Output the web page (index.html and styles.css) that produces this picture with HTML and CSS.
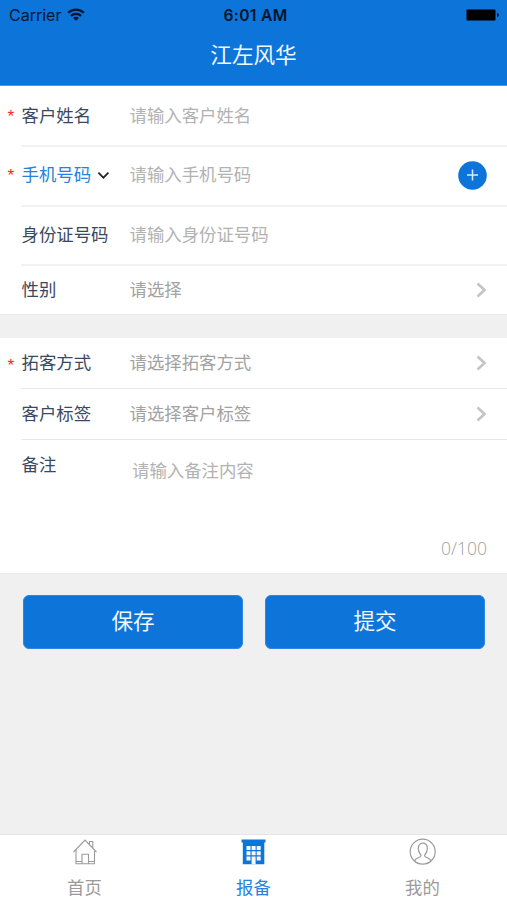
FILE: index.html
```html
<!DOCTYPE html>
<html lang="zh-CN">
<head>
<meta charset="utf-8">
<meta name="viewport" content="width=device-width, initial-scale=1">
<title>江左风华</title>
<link rel="stylesheet" href="styles.css">
</head>
<body>
<div class="app">
  <header class="header">
    <div class="status">
      <div class="carrier"><span>Carrier</span>
        <svg class="wifi" width="18" height="13" viewBox="0 0 18 13" fill="none" stroke="#03142a" stroke-width="2.300"><path d="M1.2 4.8a11 11 0 0 1 15.6 0M4 7.900a7 7 0 0 1 10 0"/><path d="M9 12.800L6.100 10a3.900 3.900 0 0 1 5.800 0z" fill="#03142a" stroke="none"/></svg>
      </div>
      <div class="time">6:01 AM</div>
      <svg class="battery" width="34" height="12" viewBox="0 0 34 12"><rect x=".5" y=".5" width="29" height="11" rx="1.5" fill="#000" stroke="#06366a"/><path d="M31 4c2.4 0 2.4 4 0 4z" fill="#000"/></svg>
    </div>
    <h1 class="title">江左风华</h1>
  </header>

  <section class="group">
    <div class="row tall">
      <span class="star">*</span><span class="label">客户姓名</span><span class="value hint">请输入客户姓名</span>
    </div>
    <div class="row tall raised">
      <span class="star">*</span>
      <span class="label active">手机号码<svg class="caret" width="13" height="9" viewBox="0 0 13 9" fill="none" stroke="#222" stroke-width="1.7"><path d="M1.4 1.7l5 5 5-5"/></svg></span>
      <span class="value hint">请输入手机号码</span>
      <svg class="add" width="29" height="29" viewBox="0 0 29 29"><circle cx="14.5" cy="14.5" r="14.3" fill="#0d75da"/><path d="M9 14h11M14.5 8.5v11" stroke="#dcebfb" stroke-width="1.5"/></svg>
    </div>
    <div class="row id-row raised">
      <span class="star"></span><span class="label">身份证号码</span><span class="value hint">请输入身份证号码</span>
    </div>
    <div class="row gender last">
      <span class="star"></span><span class="label">性别</span><span class="value">请选择</span>
      <svg class="arrow" width="11" height="16" viewBox="0 0 11 16"><path d="M1.5 1.5L8.5 8l-7 6.5"/></svg>
    </div>
  </section>

  <section class="group second">
    <div class="row short raised">
      <span class="star low">*</span><span class="label">拓客方式</span><span class="value">请选择拓客方式</span>
      <svg class="arrow" width="11" height="16" viewBox="0 0 11 16"><path d="M1.5 1.5L8.5 8l-7 6.5"/></svg>
    </div>
    <div class="row tag raised">
      <span class="star"></span><span class="label">客户标签</span><span class="value">请选择客户标签</span>
      <svg class="arrow" width="11" height="16" viewBox="0 0 11 16"><path d="M1.5 1.5L8.5 8l-7 6.5"/></svg>
    </div>
    <div class="remark">
      <span class="remark-label">备注</span>
      <span class="remark-hint">请输入备注内容</span>
      <span class="count">0/100</span>
    </div>
  </section>

  <div class="actions">
    <button class="btn" type="button">保存</button>
    <button class="btn" type="button">提交</button>
  </div>

  <nav class="tabs">
    <div class="tab">
      <svg width="28" height="28" viewBox="0 0 28 28" fill="none" stroke="#9b9b9b" stroke-width="1.1"><path d="M2.500 14L14 2l11.500 12M5 11.500v14.200h18.500V11.500M18.500 6V3.500h3.300v6M11 25.500v-9.300h6.500v9.300M5 23.500h6M17.500 23.500h6"/></svg>
      <span>首页</span>
    </div>
    <div class="tab on">
      <svg width="28" height="28" viewBox="0 0 28 28"><path d="M1.500 1.500h24v3h-1.200v21.800H2.800V4.500H1.500z" fill="#0d75da"/><path d="M6.500 8h4v4h-4zM11.600 8h4v4h-4zM16.700 8h4v4h-4zM6.500 13.200h4v4h-4zM11.600 13.200h4v4h-4zM16.700 13.200h4v4h-4zM6.500 18.400h4v4h-4zM11.600 18.400h4v7.900h-4zM16.700 18.400h4v4h-4z" fill="#f4f9ff"/></svg>
      <span>报备</span>
    </div>
    <div class="tab">
      <svg width="28" height="28" viewBox="0 0 28 28" fill="none" stroke="#9b9b9b" stroke-width="1.2"><circle cx="13.700" cy="13.700" r="12.500"/><path d="M5.500 23c.7-2.500 3.300-3 5.500-4 1.300-.7 1.100-2 .2-3-1.300-1.500-1.900-3.300-1.900-5.500 0-3.300 1.800-5.300 4.500-5.300s4.500 2 4.500 5.300c0 2.200-.6 4-1.900 5.500-.9 1-1.100 2.300.2 3 2.200 1 4.800 1.500 5.500 4"/></svg>
      <span>我的</span>
    </div>
  </nav>
</div>
</body>
</html>
```
FILE: styles.css
```css
* { box-sizing: border-box; }
body {
  margin: 0;
  background: #f0f0f0;
  font-family: "Liberation Sans", "Noto Sans CJK SC", sans-serif;
  font-size: 17.4px;
  line-height: 26px;
}
.app {
  display: flex;
  flex-direction: column;
  width: 507px;
  height: 900px;
}
svg { display: block; flex: none; }
.header {
  height: 86px;
  background: #0d75da;
  border-bottom: 1px solid #4b98e3;
}
.status {
  display: grid;
  grid-template-columns: 1fr auto 1fr;
  align-items: center;
  height: 30px;
  padding: 0 7px 0 9px;
  font-family: Inter, sans-serif;
  color: #03142a;
}
.carrier {
  display: flex;
  align-items: center;
  gap: 6px;
  font-size: 16px;
}
.wifi { margin-top: -2px; }
.time {
  padding: 1px 0 0 2px;
  font-size: 15.7px;
  font-weight: 600;
  letter-spacing: .3px;
}
.battery { justify-self: end; }
.title {
  margin: 10px 0 0;
  font-size: 21.6px;
  line-height: 32px;
  font-weight: 400;
  text-align: center;
  color: #f2f8ff;
}
.group { background: #fff; }
.second {
  margin-top: 23px;
  border-bottom: 1px solid #ebebeb;
}
.row {
  display: flex;
  align-items: center;
  position: relative;
  padding-right: 20px;
}
.row::after {
  content: "";
  position: absolute;
  left: 21px;
  right: 0;
  bottom: -1px;
  height: 2px;
  background: #f1f1f1;
}
.raised { padding-bottom: 2px; }
.tall { height: 60px; }
.id-row { height: 59px; }
.gender { height: 50px; padding-bottom: 1px; }
.short { height: 51px; }
.tag { height: 51px; }
.second .row::after { bottom: 0; height: 1px; background: #e8e8e8; }
.row.last::after { left: 0; bottom: 0; height: 1px; background: #e9e9e9; }
.star {
  width: 21.5px;
  padding-left: 7.5px;
  color: #fb2222;
  font-size: 17.4px;
}
.low { padding-top: 4px; }
.label {
  display: flex;
  align-items: center;
  width: 108px;
  color: #3a4962;
}
.active { color: #2581dc; }
.caret { margin-left: 6px; }
.value { flex: 1; color: #a2a2a2; }
.hint { color: #b2b2b2; }
.arrow {
  fill: none;
  stroke: #c5c5c7;
  stroke-width: 2.7;
}
.remark {
  display: grid;
  grid-template-columns: 110.5px 1fr;
  grid-template-rows: 1fr 26px;
  height: 133px;
  padding: 12px 20px 12px 21.5px;
}
.remark-label { color: #3a4962; }
.remark-hint { padding-top: 6px; color: #b2b2b2; }
.count {
  grid-column: 2;
  justify-self: end;
  font-family: "Open Sans", sans-serif;
  font-weight: 300;
  font-size: 17.5px;
  color: #a0a0a0;
}
.actions {
  display: grid;
  grid-template-columns: 1fr 1fr;
  gap: 22px;
  padding: 22px 22px 0 23px;
}
.btn {
  height: 54px;
  margin-top: -.6px;
  padding: 0;
  border: 1px solid #2b87df;
  border-radius: 6px;
  background: #0d75da;
  color: #eff7ff;
  font: inherit;
  font-size: 21.6px;
}
.tabs {
  display: grid;
  grid-template-columns: repeat(3, 1fr);
  height: 66px;
  margin-top: auto;
  border-top: 1px solid #e5e5e5;
  background: #fff;
}
.tab {
  display: flex;
  flex-direction: column;
  align-items: center;
  gap: 9px;
  padding-top: 3px;
  color: #9b9b9b;
}
.on { color: #2a80da; }
```
